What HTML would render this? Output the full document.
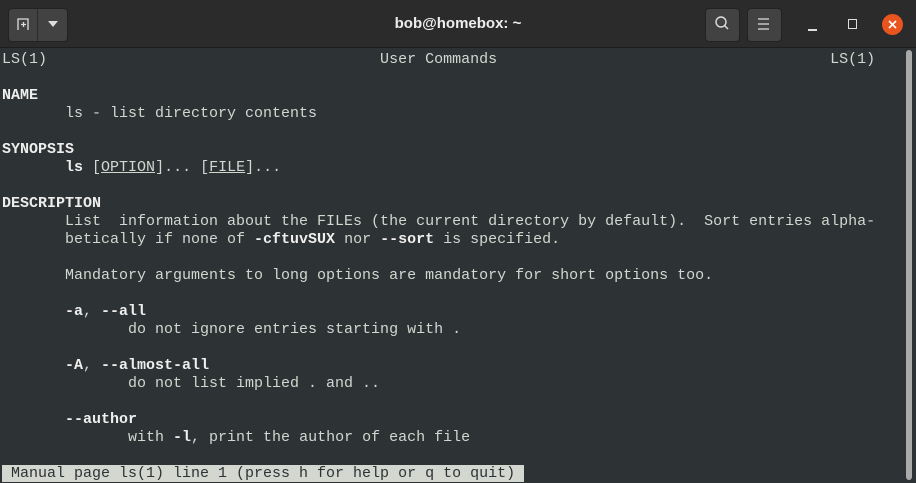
<!DOCTYPE html>
<html><head><style>
body{margin:0;width:916px;height:483px;background:#2d3235;overflow:hidden;position:relative;font-family:"Liberation Sans",sans-serif}
#hdr{position:absolute;left:0;top:0;width:916px;height:47px;background:#2b2b2b;border-bottom:1px solid #1e1e1e}
.btn{position:absolute;top:8px;height:32px;background:#424242;border-radius:4px;border:1px solid #222}
#title{position:absolute;top:0;left:0;width:916px;line-height:47px;text-align:center;color:#eee;font-weight:bold;font-size:15px}
pre{position:absolute;left:2px;top:51px;margin:0;font-family:"Liberation Mono",monospace;font-size:15px;line-height:18px;color:#d3d7cf;letter-spacing:0}
b{color:#eeeeec}
u{text-decoration:underline}
.st{background:#d3d7cf;color:#2d3235}
#sb{position:absolute;left:906px;top:50px;width:6px;height:430px;background:#aaa;border-radius:3px}
</style></head><body>
<div id="hdr">
<div class="btn" style="left:8px;width:58px"></div>
<div style="position:absolute;left:37px;top:9px;width:1px;height:32px;background:#2a2a2a"></div>
<svg style="position:absolute;left:16px;top:16px" width="16" height="16" viewBox="0 0 16 16"><path d="M2 14V3h10v11M5 8.5h5M7.5 6v5" stroke="#ddd" stroke-width="1.3" fill="none"/></svg>
<svg style="position:absolute;left:48px;top:21px" width="10" height="6"><path d="M0 0h10L5 6z" fill="#ddd"/></svg>
<div class="btn" style="left:705px;width:33px"></div>
<svg style="position:absolute;left:714px;top:15px" width="16" height="16"><circle cx="7" cy="7" r="5" stroke="#ddd" stroke-width="1.4" fill="none"/><path d="M10.5 10.5L14 14" stroke="#ddd" stroke-width="1.4"/></svg>
<div class="btn" style="left:747px;width:33px"></div>
<svg style="position:absolute;left:757px;top:17px" width="14" height="14"><path d="M1 2h11M1 7h11M1 12h11" stroke="#ddd" stroke-width="1.2"/></svg>
<div style="position:absolute;left:808px;top:29px;width:9px;height:1.5px;background:#ddd"></div>
<div style="position:absolute;left:848px;top:19px;width:7px;height:8px;border:1.5px solid #ddd"></div>
<div style="position:absolute;left:882px;top:14px;width:21px;height:21px;border-radius:50%;background:#e9541f"></div>
<svg style="position:absolute;left:887px;top:19px" width="11" height="11"><path d="M2 2l7 7M9 2l-7 7" stroke="#fff" stroke-width="1.6"/></svg>
<div id="title">bob@homebox: ~</div>
</div>
<div id="sb"></div>
<pre>LS(1)                                     User Commands                                     LS(1)

<b>NAME</b>
       ls - list directory contents

<b>SYNOPSIS</b>
       <b>ls</b> [<u>OPTION</u>]... [<u>FILE</u>]...

<b>DESCRIPTION</b>
       List  information about the FILEs (the current directory by default).  Sort entries alpha‐
       betically if none of <b>-cftuvSUX</b> nor <b>--sort</b> is specified.

       Mandatory arguments to long options are mandatory for short options too.

       <b>-a</b>, <b>--all</b>
              do not ignore entries starting with .

       <b>-A</b>, <b>--almost-all</b>
              do not list implied . and ..

       <b>--author</b>
              with <b>-l</b>, print the author of each file

<span class="st"> Manual page ls(1) line 1 (press h for help or q to quit) </span></pre>
</body></html>
